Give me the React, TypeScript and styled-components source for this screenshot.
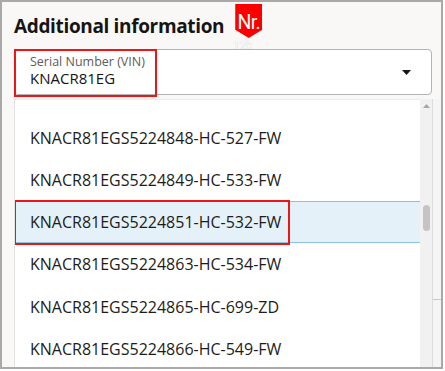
import React from "react";
import styled, { createGlobalStyle } from "styled-components";

const Global = createGlobalStyle`
  html, body { margin: 0; padding: 0; background: #ffffff; }
  body { font-family: "Open Sans", "Noto Sans", sans-serif; }
  * { box-sizing: border-box; }
`;

const Frame = styled.div`
  position: relative;
  width: 443px;
  height: 369px;
  border: 2px solid #a9a9a9;
  background: #f9f8f6;
  overflow: hidden;
  display: flex;
  flex-direction: column;
`;

const TitleRow = styled.div`
  display: flex;
  align-items: flex-start;
  height: 47px;
  padding-left: 12px;
`;

const Title = styled.h2`
  margin: 10.5px 0 0 0;
  font-size: 19px;
  line-height: 26px;
  font-weight: 700;
  letter-spacing: -0.35px;
  color: #161513;
`;

const Badge = styled.div`
  position: relative;
  flex: none;
  margin: 2px 0 0 11px;
  width: 27px;
  height: 34px;
  background: #fc0000;
  clip-path: polygon(0 0, 100% 0, 100% 76%, 50% 100%, 0 76%);
  color: #ffffff;
  font-family: Roboto, "Open Sans", sans-serif;
  font-size: 19.5px;
  line-height: 20px;
  text-align: center;
  padding-top: 9px;
  letter-spacing: -0.6px;
  white-space: nowrap;
`;

const BadgeSub = styled.span`
  position: absolute;
  left: 231px;
  top: 37px;
  font-family: Roboto, sans-serif;
  font-size: 12px;
  color: #ffffff;
  text-shadow: 0 0 1px rgba(0, 0, 0, 0.25);
`;

const Field = styled.div`
  position: relative;
  margin: 0 9px 0 12px;
  height: 46px;
  border: 1px solid #b4b4b4;
  border-radius: 4px;
  background: #ffffff;
  display: flex;
  align-items: center;
  padding: 0 20px 0 15px;
`;

const FieldText = styled.div`
  display: flex;
  flex-direction: column;
  align-self: flex-start;
  padding-top: 3.6px;
`;

const FieldLabel = styled.span`
  font-size: 12.5px;
  line-height: 15px;
  color: #5c5c5c;
`;

const FieldValue = styled.span`
  font-size: 15px;
  line-height: 18px;
  color: #161513;
`;

const Caret = styled.svg`
  margin-left: auto;
  width: 9px;
  height: 5px;
`;

const Annotation = styled.div<{ $w: number; $h: number; $top: number }>`
  position: absolute;
  left: -1px;
  top: ${(p) => p.$top}px;
  width: ${(p) => p.$w}px;
  height: ${(p) => p.$h}px;
  border: 2px solid #f01515;
  pointer-events: none;
`;

const Popup = styled.div`
  position: absolute;
  top: 97px;
  left: 12px;
  right: 0;
  bottom: 0;
  display: flex;
`;

const List = styled.ul`
  flex: 1;
  margin: 0;
  padding: 16.8px 0 0 0;
  list-style: none;
  background: #ffffff;
  border-left: 1px solid #e2e2e2;
  border-top: 1px solid #ececec;
  overflow: hidden;
`;

const Row = styled.li<{ $selected?: boolean }>`
  position: relative;
  height: 42.2px;
  display: flex;
  align-items: center;
  padding-left: 15px;
  font-size: 16px;
  color: #1d1c1a;
  white-space: nowrap;
  background: ${(p) => (p.$selected ? "#e5f1f8" : "transparent")};
  border-top: 1px solid ${(p) => (p.$selected ? "#8dc2db" : "transparent")};
  border-bottom: 1px solid ${(p) => (p.$selected ? "#8dc2db" : "transparent")};
`;

const Scrollbar = styled.div`
  width: 12px;
  background: #f1f1f1;
  display: flex;
  flex-direction: column;
  align-items: center;
`;

const ArrowUp = styled.svg`
  margin-top: 5px;
  width: 7px;
  height: 4px;
`;

const Thumb = styled.div`
  margin-top: 97px;
  width: 7px;
  height: 26px;
  border-radius: 4px;
  background: #c4c4c4;
`;

const Strip = styled.div`
  width: 9px;
  background: #f5f5f5;
  border-left: 1px solid #dcdcdc;
`;

const StripMark = styled.div`
  height: 201px;
  border-bottom: 1px solid #c9c9c9;
`;

const items = [
  "KNACR81EGS5224848-HC-527-FW",
  "KNACR81EGS5224849-HC-533-FW",
  "KNACR81EGS5224851-HC-532-FW",
  "KNACR81EGS5224863-HC-534-FW",
  "KNACR81EGS5224865-HC-699-ZD",
  "KNACR81EGS5224866-HC-549-FW",
];

export default function App() {
  return (
    <>
      <Global />
      <Frame>
        <TitleRow>
          <Title>Additional information</Title>
          <Badge>Nr.</Badge>
          <BadgeSub>12k</BadgeSub>
        </TitleRow>
        <Field>
          <FieldText>
            <FieldLabel>Serial Number (VIN)</FieldLabel>
            <FieldValue>KNACR81EG</FieldValue>
          </FieldText>
          <Caret viewBox="0 0 9 5">
            <path d="M0 0 H9 L4.5 5 Z" fill="#161513" />
          </Caret>
          <Annotation $w={143} $h={48} $top={-1} />
        </Field>
        <Popup>
          <List>
            {items.map((it, i) => (
              <Row key={it} $selected={i === 2}>
                {it}
                {i === 2 && <Annotation $w={276} $h={45} $top={-2} />}
              </Row>
            ))}
          </List>
          <Scrollbar>
            <ArrowUp viewBox="0 0 7 4">
              <path d="M0 4 L3.5 0 L7 4 Z" fill="#a6a6a6" />
            </ArrowUp>
            <Thumb />
          </Scrollbar>
          <Strip>
            <StripMark />
          </Strip>
        </Popup>
      </Frame>
    </>
  );
}
